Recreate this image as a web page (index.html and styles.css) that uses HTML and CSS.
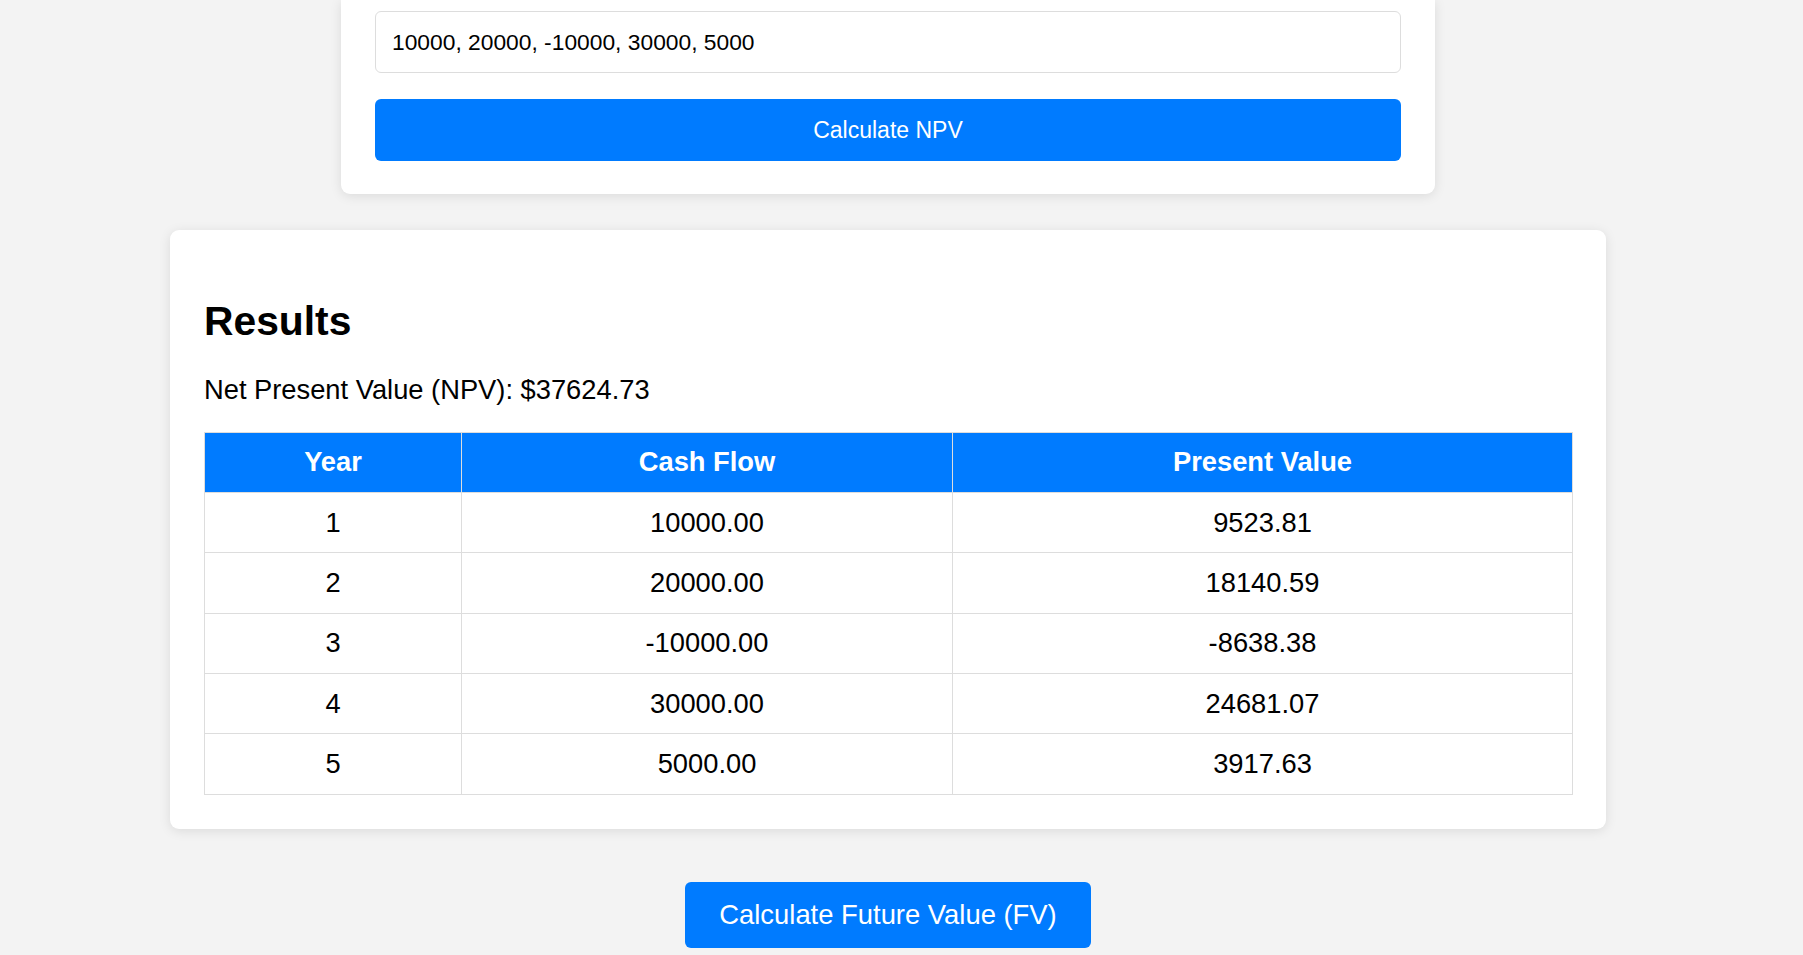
FILE: index.html
```html
<!DOCTYPE html>
<html lang="en">
<head>
<meta charset="utf-8">
<title>NPV Calculator</title>
<link rel="stylesheet" href="styles.css">
</head>
<body>
<main class="page">
  <section class="card card-form">
    <input class="cash-input" type="text" value="10000, 20000, -10000, 30000, 5000">
    <button class="btn btn-block" type="button">Calculate NPV</button>
  </section>

  <section class="card card-results">
    <h2 class="results-title">Results</h2>
    <p class="npv-line">Net Present Value (NPV): $37624.73</p>
    <table class="results-table">
      <colgroup>
        <col class="col-year">
        <col class="col-cash">
        <col class="col-pv">
      </colgroup>
      <thead>
        <tr><th>Year</th><th>Cash Flow</th><th>Present Value</th></tr>
      </thead>
      <tbody>
        <tr><td>1</td><td>10000.00</td><td>9523.81</td></tr>
        <tr><td>2</td><td>20000.00</td><td>18140.59</td></tr>
        <tr><td>3</td><td>-10000.00</td><td>-8638.38</td></tr>
        <tr><td>4</td><td>30000.00</td><td>24681.07</td></tr>
        <tr><td>5</td><td>5000.00</td><td>3917.63</td></tr>
      </tbody>
    </table>
  </section>

  <button class="btn btn-fv" type="button">Calculate Future Value (FV)</button>
</main>
</body>
</html>
```

FILE: styles.css
```css
html, body {
  margin: 0;
  padding: 0;
}

body {
  background: #f3f3f3;
  font-family: "Liberation Sans", Arial, sans-serif;
  color: #000;
}

.page {
  width: 1776px;
  display: flex;
  flex-direction: column;
  align-items: center;
  padding-bottom: 40px;
}

.card {
  background: #fff;
  box-shadow: 0 2px 12px rgba(0, 0, 0, 0.1);
  box-sizing: border-box;
}

.card-form {
  width: 1094px;
  padding: 11px 34px 33px;
  border-radius: 0 0 9px 9px;
  display: flex;
  flex-direction: column;
  gap: 26px;
}

.cash-input {
  box-sizing: border-box;
  width: 100%;
  height: 62px;
  margin: 0;
  padding: 0 16px;
  border: 1px solid #ddd;
  border-radius: 6px;
  font-family: "Liberation Sans", Arial, sans-serif;
  font-size: 22.8px;
  color: #000;
  background: #fff;
  outline: none;
}

.btn {
  border: none;
  background: #007bff;
  color: #fff;
  font-family: "Liberation Sans", Arial, sans-serif;
  border-radius: 6px;
  cursor: pointer;
  margin: 0;
}

.btn-block {
  width: 100%;
  height: 62px;
  font-size: 23px;
  padding: 0;
}

.card-results {
  width: 1436px;
  margin-top: 36px;
  padding: 34.5px 34px;
  border-radius: 9px;
}

.results-title {
  font-size: 40.8px;
  font-weight: bold;
  margin: 33.2px 0 29.3px;
}

.npv-line {
  font-size: 27.3px;
  margin: 0 0 25.6px;
}

.results-table {
  width: 100%;
  border-collapse: collapse;
  table-layout: fixed;
  font-size: 27.3px;
}

.col-year { width: 257px; }
.col-cash { width: 491px; }
.col-pv { width: 620px; }

.results-table th,
.results-table td {
  border: 1px solid #ddd;
  padding: 13.7px 10px;
  text-align: center;
}

.results-table th {
  background: #007bff;
  color: #fff;
  font-weight: bold;
}

.btn-fv {
  margin-top: 52.5px;
  font-size: 27.4px;
  padding: 17px 34.5px;
}
```
